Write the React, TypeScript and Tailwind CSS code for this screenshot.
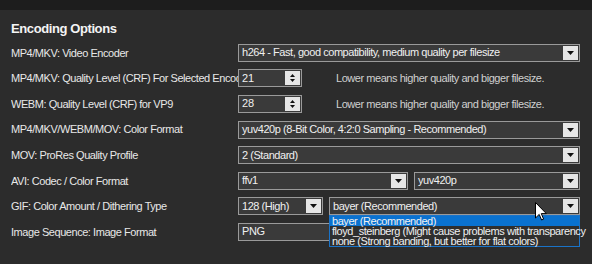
import React from "react";

const font = { fontFamily: '"Liberation Sans", "Noto Sans CJK JP", sans-serif' };

function Arrow() {
  return (
    <div className="flex h-full w-[15px] items-center justify-center bg-[#e6e6e6]">
      <svg width="7" height="4" viewBox="0 0 7 4">
        <path d="M0 0H7L3.5 4Z" fill="#111" />
      </svg>
    </div>
  );
}

function Select({ text, w }: { text: string; w: string }) {
  return (
    <div className={`flex h-[18px] ${w} items-stretch border border-[#9a9a9a] bg-[#3a3a3a] p-px`}>
      <div className="flex flex-1 items-center overflow-hidden whitespace-nowrap pl-[2px] text-[11px] leading-none tracking-[-0.45px] text-[#f0f0f0]">
        {text}
      </div>
      <Arrow />
    </div>
  );
}

function Spin({ value }: { value: string }) {
  return (
    <div className="flex h-[18px] w-[64px] items-stretch border border-[#9a9a9a] bg-[#3a3a3a] p-px">
      <div className="flex flex-1 items-center pl-[2px] text-[11px] leading-none text-[#f0f0f0]">{value}</div>
      <div className="flex w-[15px] flex-col items-center justify-center gap-[2px] bg-[#e6e6e6]">
        <svg width="5" height="3" viewBox="0 0 5 3">
          <path d="M0 3H5L2.5 0Z" fill="#111" />
        </svg>
        <svg width="5" height="3" viewBox="0 0 5 3">
          <path d="M0 0H5L2.5 3Z" fill="#111" />
        </svg>
      </div>
    </div>
  );
}

function Row({ label, children }: { label: string; children: React.ReactNode }) {
  return (
    <div className="flex h-[25.6px] items-center">
      <div className="w-[227px] overflow-hidden whitespace-nowrap text-[11px] tracking-[-0.45px] text-[#e8e8e8]">{label}</div>
      <div className="flex flex-1 items-center">{children}</div>
    </div>
  );
}

export default function App() {
  return (
    <div className="relative h-[264px] w-[592px] overflow-hidden bg-[#2c2c2c]" style={font}>
      <div className="h-[10px] bg-[#1d1d1d]" />
      <div className="pl-[11px]">
        <div className="pt-[11px] text-[13px] font-bold leading-[16px] tracking-[-0.4px] text-[#f4f4f4]">Encoding Options</div>
        <div className="mt-[3px]">
          <Row label="MP4/MKV: Video Encoder">
            <Select w="w-[342px]" text="h264 - Fast, good compatibility, medium quality per filesize" />
          </Row>
          <Row label="MP4/MKV: Quality Level (CRF) For Selected Encoder">
            <Spin value="21" />
            <span className="ml-[34px] text-[11px] tracking-[-0.45px] text-[#d0d0d0]">Lower means higher quality and bigger filesize.</span>
          </Row>
          <Row label="WEBM: Quality Level (CRF) for VP9">
            <Spin value="28" />
            <span className="ml-[34px] text-[11px] tracking-[-0.45px] text-[#d0d0d0]">Lower means higher quality and bigger filesize.</span>
          </Row>
          <Row label="MP4/MKV/WEBM/MOV: Color Format">
            <Select w="w-[342px]" text="yuv420p (8-Bit Color, 4:2:0 Sampling - Recommended)" />
          </Row>
          <Row label="MOV: ProRes Quality Profile">
            <Select w="w-[342px]" text="2 (Standard)" />
          </Row>
          <Row label="AVI: Codec / Color Format">
            <div className="flex gap-[6px]">
              <Select w="w-[170px]" text="ffv1" />
              <Select w="w-[166px]" text="yuv420p" />
            </div>
          </Row>
          <Row label="GIF: Color Amount / Dithering Type">
            <div className="relative flex gap-[6px]">
              <Select w="w-[85px]" text="128 (High)" />
              <div className="relative">
                <Select w="w-[251px]" text="bayer (Recommended)" />
                <div className="absolute left-0 top-[18px] z-10 w-[251px] border border-[#1a73c8] bg-[#2f2f2f] text-[11px] leading-[10px] tracking-[-0.45px] text-[#f0f0f0]">
                  <div className="whitespace-nowrap bg-[#0a72d0] pl-[2px]">bayer (Recommended)</div>
                  <div className="whitespace-nowrap pl-[2px]">floyd_steinberg (Might cause problems with transparency</div>
                  <div className="whitespace-nowrap pl-[2px]">none (Strong banding, but better for flat colors)</div>
                </div>
              </div>
            </div>
          </Row>
          <Row label="Image Sequence: Image Format">
            <Select w="w-[170px]" text="PNG" />
          </Row>
        </div>
      </div>
      <svg className="absolute left-[535px] top-[202px] z-20" width="12" height="19" viewBox="0 0 12 19">
        <path d="M0.5 0.5V16L4.2 12.4L6.6 18L8.6 17.1L6.3 11.6H11.3Z" fill="#fff" stroke="#000" strokeWidth="1" />
      </svg>
    </div>
  );
}
